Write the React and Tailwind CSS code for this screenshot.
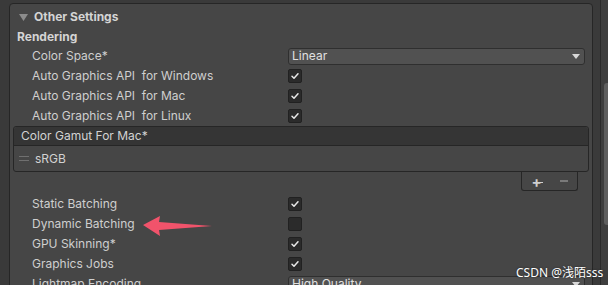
import React from "react";

const font = { fontFamily: "Inter, 'Noto Sans', 'Noto Sans CJK SC', sans-serif" };

function Check({ on = true }) {
  return (
    <div className="w-[14px] h-[14px] rounded-[2px] bg-[#2b2b2b] border border-[#212121] flex items-center justify-center">
      {on && (
        <svg width="10" height="10" viewBox="0 0 10 10">
          <path d="M2 5.2 L4 7.2 L8 2.8" fill="none" stroke="#e8e8e8" strokeWidth="1.5" strokeLinecap="round" strokeLinejoin="round" />
        </svg>
      )}
    </div>
  );
}

function Dropdown({ value }) {
  return (
    <div className="w-[297px] h-[17px] rounded-[3px] bg-[#515151] border border-[#2f2f2f] flex items-center justify-between pl-[3px] pr-[4px] text-[#e0e0e0]">
      <span>{value}</span>
      <svg width="8" height="5" viewBox="0 0 8 5">
        <path d="M0 0 H8 L4 5 Z" fill="#d8d8d8" />
      </svg>
    </div>
  );
}

function Row({ label, children }) {
  return (
    <div className="flex items-center h-[20px]">
      <div className="w-[278px] pl-[22px] whitespace-pre text-[#cfcfcf]">{label}</div>
      {children}
    </div>
  );
}

export default function App() {
  return (
    <div className="w-[608px] h-[285px] overflow-hidden bg-[#3a3a3a] flex text-[12px] relative" style={font}>
      {/* 设置面板 */}
      <div className="ml-[9px] mt-[3px] w-[584px] h-[300px] border border-[#262626] rounded-[4px] bg-[#464646] flex flex-col">
        <div className="flex items-center h-[20px] mt-[3px] pl-[9px] gap-[6px]">
          <svg width="9" height="7" viewBox="0 0 9 7">
            <path d="M0 0 H9 L4.5 7 Z" fill="#8c8c8c" />
          </svg>
          <span className="font-bold text-[#d4d4d4]">Other Settings</span>
        </div>
        <div className="flex items-center h-[19px] pl-[7px] font-bold text-[#d4d4d4]">Rendering</div>
        <Row label="Color Space*">
          <Dropdown value="Linear" />
        </Row>
        <Row label="Auto Graphics API  for Windows"><Check /></Row>
        <Row label="Auto Graphics API  for Mac"><Check /></Row>
        <Row label="Auto Graphics API  for Linux"><Check /></Row>

        {/* Color Gamut 列表 */}
        <div className="ml-[3px] w-[576px] border border-[#262626] rounded-[3px] flex flex-col">
          <div className="h-[19px] bg-[#353535] border-b border-[#262626] flex items-center pl-[7px] text-[#d2d2d2] rounded-t-[3px]">
            Color Gamut For Mac*
          </div>
          <div className="h-[25px] flex items-center pl-[5px] gap-[6px] text-[#d2d2d2]">
            <div className="flex flex-col gap-[3px]">
              <div className="w-[10px] h-[1px] bg-[#707070]" />
              <div className="w-[10px] h-[1px] bg-[#707070]" />
            </div>
            <span>sRGB</span>
          </div>
        </div>
        <div className="flex justify-end pr-[14px]">
          <div className="w-[57px] h-[19px] border border-t-0 border-[#262626] rounded-b-[3px] flex items-center justify-center gap-[12px] text-[#cfcfcf]">
            <span className="relative text-[15px] font-bold leading-none">+<span className="absolute left-[9px] top-[8px] w-[3px] h-[1px] bg-[#cfcfcf]" /></span>
            <span className="w-[8px] h-[2px] bg-[#7a7a7a] ml-[6px]" />
          </div>
        </div>

        <div className="h-[3px]" />
        <Row label="Static Batching"><Check /></Row>
        <Row label="Dynamic Batching"><Check on={false} /></Row>
        <Row label="GPU Skinning*"><Check /></Row>
        <Row label="Graphics Jobs"><Check /></Row>
        <Row label="Lightmap Encoding">
          <Dropdown value="High Quality" />
        </Row>
      </div>

      {/* 右侧滚动条 */}
      <div className="ml-[7px] w-[1px] h-full bg-[#2a2a2a]" />
      <div className="flex-1 h-full bg-[#3e3e3e] flex justify-end">
        <div className="w-[4px] mt-[83px] h-[142px] rounded-l-[3px] bg-[#5e5e5e]" />
      </div>

      {/* 红色箭头 */}
      <svg className="absolute left-[140px] top-[214px]" width="76" height="24" viewBox="0 0 76 24">
        <path d="M3 11 L20 2 L19 8 L72 12 L19 16 L20 22 Z" fill="#f1536b" />
      </svg>

      {/* 水印 */}
      <div
        className="absolute left-[516px] top-[264px] text-[12px] text-white whitespace-nowrap"
        style={{ fontFamily: "'Noto Sans', 'Noto Sans CJK SC', sans-serif", textShadow: "0 0 2px #222" }}
      >
        CSDN @浅陌sss
      </div>
    </div>
  );
}
